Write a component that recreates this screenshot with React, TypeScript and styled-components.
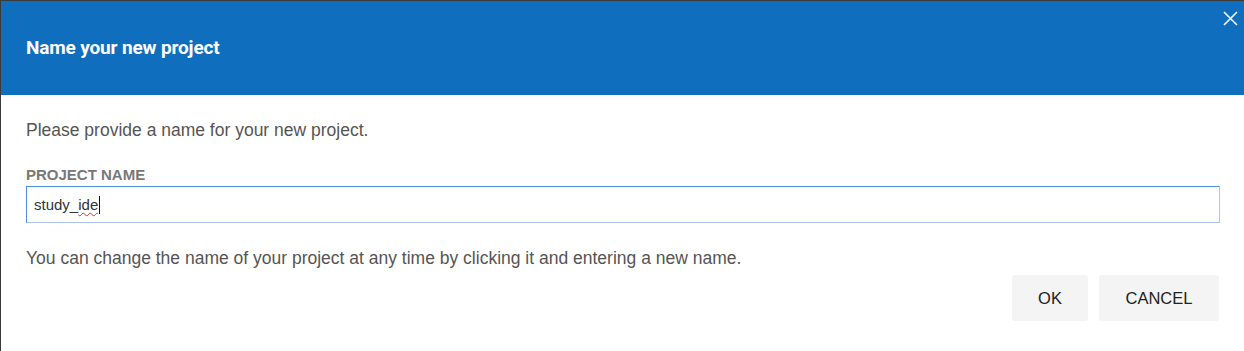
import React from "react";
import styled, { createGlobalStyle } from "styled-components";

const Global = createGlobalStyle`
  html, body { margin: 0; padding: 0; background: #3b3b3b; }
  body { font-family: "Liberation Sans", Arial, sans-serif; }
  * { box-sizing: border-box; }
`;

const Page = styled.div`
  padding: 1px 0 0 1px;
  height: 351px;
  overflow: hidden;
`;

const Dialog = styled.div`
  background: #ffffff;
  height: 350px;
  border-top-left-radius: 2px;
  border-top-right-radius: 2px;
  display: flex;
  flex-direction: column;
`;

const Header = styled.div`
  position: relative;
  height: 94px;
  background: #106ebe;
  display: flex;
  align-items: center;
  padding-left: 25px;
`;

const Title = styled.h2`
  margin: 0;
  color: #ffffff;
  font-family: Roboto, "Liberation Sans", Arial, sans-serif;
  font-weight: 700;
  font-size: 19px;
  letter-spacing: -0.15px;
  padding-bottom: 2px;
`;

const Close = styled.button`
  position: absolute;
  top: 8px;
  right: 5px;
  width: 18px;
  height: 18px;
  padding: 0;
  border: none;
  background: transparent;
  display: flex;
  align-items: center;
  justify-content: center;
  cursor: pointer;
`;

const Body = styled.div`
  padding: 21px 24px 0 25px;
  display: flex;
  flex-direction: column;
`;

const Intro = styled.p`
  margin: 0;
  font-size: 17.5px;
  line-height: 28px;
  color: #555555;
`;

const Label = styled.label`
  margin-top: 23px;
  font-size: 15px;
  font-weight: 700;
  color: #787878;
  line-height: 16px;
`;

const Field = styled.div`
  margin-top: 3px;
  height: 37px;
  border: 1px solid #4a8fe0;
  border-bottom-color: #a9c6ea;
  border-right-color: #a9c6ea;
  display: flex;
  align-items: center;
  padding-left: 7px;
  font-size: 15px;
  color: #333333;
`;

const Misspelled = styled.span`
  text-decoration: underline wavy #e03030;
  text-decoration-thickness: 1px;
  text-underline-offset: 2px;
`;

const Caret = styled.span`
  display: inline-block;
  width: 1px;
  height: 18px;
  background: #111;
  margin-left: 1px;
`;

const Help = styled.p`
  margin: 21px 0 0;
  font-size: 17.5px;
  line-height: 28px;
  color: #555555;
`;

const Actions = styled.div`
  display: flex;
  justify-content: flex-end;
  gap: 11px;
  margin-top: 3px;
  padding-right: 1px;
`;

const Button = styled.button<{ $w: number }>`
  width: ${(p) => p.$w}px;
  height: 46px;
  border: none;
  border-radius: 3px;
  background: #f4f4f4;
  color: #222222;
  font-family: "Liberation Sans", Arial, sans-serif;
  font-size: 16.5px;
  cursor: pointer;
`;

export default function App() {
  return (
    <>
      <Global />
      <Page>
        <Dialog>
          <Header>
            <Title>Name your new project</Title>
            <Close aria-label="Close">
              <svg width="15" height="15" viewBox="0 0 15 15">
                <path d="M1 1 L14 14 M14 1 L1 14" stroke="#ffffff" strokeWidth="1.6" fill="none" />
              </svg>
            </Close>
          </Header>
          <Body>
            <Intro>Please provide a name for your new project.</Intro>
            <Label>PROJECT NAME</Label>
            <Field role="textbox">
              study_<Misspelled>ide</Misspelled>
              <Caret />
            </Field>
            <Help>You can change the name of your project at any time by clicking it and entering a new name.</Help>
            <Actions>
              <Button $w={76}>OK</Button>
              <Button $w={120}>CANCEL</Button>
            </Actions>
          </Body>
        </Dialog>
      </Page>
    </>
  );
}
